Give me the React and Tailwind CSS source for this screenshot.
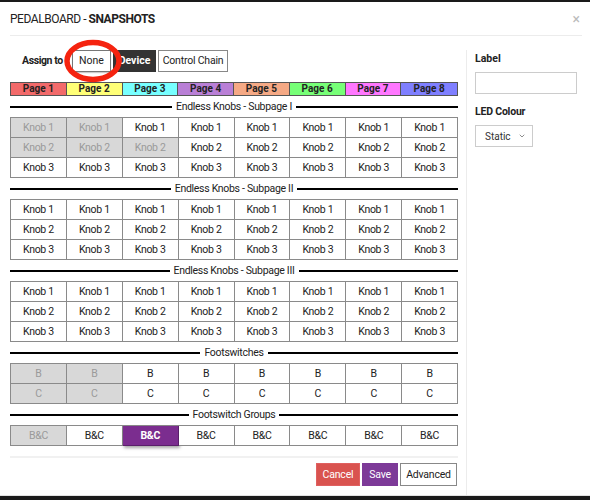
import React from "react";
import { ChevronDown } from "lucide-react";

const pages = [
  { name: "Page 1", bg: "bg-[#f26a6a]" },
  { name: "Page 2", bg: "bg-[#ffff77]" },
  { name: "Page 3", bg: "bg-[#77ffff]" },
  { name: "Page 4", bg: "bg-[#b97fd6]" },
  { name: "Page 5", bg: "bg-[#f5a985]" },
  { name: "Page 6", bg: "bg-[#77ff77]" },
  { name: "Page 7", bg: "bg-[#ff77ff]" },
  { name: "Page 8", bg: "bg-[#7f7fff]" },
];

const SectionTitle = ({ label }) => (
  <div className="flex items-center h-[12px] mt-[5px]">
    <div className="flex-1 h-[2px] bg-black" />
    <span className="px-[4px] text-[10.5px] leading-none text-[#222] tracking-[-0.3px]">{label}</span>
    <div className="flex-1 h-[2px] bg-black" />
  </div>
);

// disabled: "row-col" keys that are greyed out
const Grid = ({ rows, disabled = [], selected = [] }) => (
  <div className="grid grid-cols-8 mt-[4px] border-l border-t border-[#8a8a8a]">
    {rows.map((label, r) =>
      Array.from({ length: 8 }).map((_, c) => {
        const key = `${r}-${c}`;
        const off = disabled.includes(key);
        const sel = selected.includes(key);
        return (
          <div
            key={key}
            className={
              "h-[20px] flex items-center justify-center border-r border-b text-[10.5px] tracking-[-0.3px] " +
              (sel
                ? "bg-[#7b2d8f] text-white font-bold border-[#5a1f6a] shadow-[1px_2px_3px_rgba(0,0,0,0.35)]"
                : off
                ? "bg-[#d8d8d8] text-[#9a9a9a] border-[#8a8a8a]"
                : "bg-white text-[#222] border-[#8a8a8a]")
            }
          >
            {label}
          </div>
        );
      })
    )}
  </div>
);

const knobs = ["Knob 1", "Knob 2", "Knob 3"];

export default function App() {
  return (
    <div
      className="w-[590px] h-[500px] bg-white flex flex-col relative overflow-hidden border-t-2 border-[#1a1a1a]"
      style={{ fontFamily: "Roboto, 'Liberation Sans', sans-serif" }}
    >
      {/* header */}
      <div className="ml-[10px] mr-[8px] h-[34px] flex items-center justify-between border-b border-[#ececec]">
        <div className="text-[12px] tracking-[-0.45px] text-[#222]">
          PEDALBOARD - <span className="font-bold">SNAPSHOTS</span>
        </div>
        <div className="text-[#bbb] text-[14px] leading-none mr-[2px]">×</div>
      </div>

      <div className="flex flex-1">
        {/* left column */}
        <div className="w-[448px] ml-[10px] flex flex-col pt-[14px]">
          <div className="h-[22px] flex items-center text-[10.5px] relative">
            <span className="ml-[12px] w-[50px] whitespace-nowrap font-bold text-[#222] tracking-[-0.4px]">Assign to</span>
            <button className="w-[39px] h-[22px] border border-[#777] bg-white text-[#222] shadow-[0_1px_1px_rgba(0,0,0,0.2)]">
              None
            </button>
            <button className="ml-[2px] w-[43px] h-[22px] bg-[#333] text-white font-bold">Device</button>
            <button className="ml-[2px] w-[70px] h-[22px] border border-[#888] bg-white text-[#222] tracking-[-0.2px]">
              Control Chain
            </button>
            <svg className="absolute left-[53px] top-[-12px]" width="60" height="46" viewBox="0 0 60 46">
              <ellipse cx="30" cy="23" rx="26" ry="18.5" fill="none" stroke="#f5230f" strokeWidth="5.5" />
            </svg>
          </div>

          <div className="grid grid-cols-8 mt-[10px] border border-[#555]">
            {pages.map((p, i) => (
              <div
                key={p.name}
                className={`${p.bg} h-[12px] flex items-center justify-center text-[10px] font-bold text-[#222] leading-none ${
                  i < 7 ? "border-r border-[#555]" : ""
                }`}
              >
                {p.name}
              </div>
            ))}
          </div>

          <SectionTitle label="Endless Knobs - Subpage I" />
          <Grid rows={knobs} disabled={["0-0", "0-1", "1-0", "1-1", "1-2"]} />

          <SectionTitle label="Endless Knobs - Subpage II" />
          <Grid rows={knobs} />

          <SectionTitle label="Endless Knobs - Subpage III" />
          <Grid rows={knobs} />

          <SectionTitle label="Footswitches" />
          <Grid rows={["B", "C"]} disabled={["0-0", "0-1", "1-0", "1-1"]} />

          <SectionTitle label="Footswitch Groups" />
          <Grid rows={["B&C"]} disabled={["0-0"]} selected={["0-2"]} />

          <div className="mt-[10px] border-t-2 border-[#f1f1f1]" />
          <div className="mt-[5px] flex justify-end gap-[2px] pr-[1px] text-[10.5px] tracking-[-0.2px]">
            <button className="w-[44px] h-[23px] bg-[#d9534f] border border-[#e06060] text-white">Cancel</button>
            <button className="w-[36px] h-[23px] bg-[#7d3a98] text-white">Save</button>
            <button className="w-[57px] h-[23px] bg-white border border-[#888] text-[#222]">Advanced</button>
          </div>
        </div>

        {/* right column */}
        <div className="ml-[8px] mt-[14px] border-l border-[#ececec] pl-[8px] flex flex-col">
          <div className="text-[10.5px] font-bold text-[#222] leading-[18px]">Label</div>
          <input className="mt-[4px] w-[102px] h-[22px] border border-[#ccc] outline-none" />
          <div className="mt-[9px] text-[10.5px] font-bold text-[#222] leading-[18px] tracking-[-0.2px]">LED Colour</div>
          <div className="mt-[4px] w-[58px] h-[22px] border border-[#ccc] flex items-center justify-between pl-[9px] pr-[6px] text-[10px] text-[#333]">
            <span>Static</span>
            <ChevronDown size={8} strokeWidth={2} className="text-[#555]" />
          </div>
        </div>
      </div>

      <div className="h-[5px] border-t border-[#e2e2e2] bg-[#1a1a1a]" />
    </div>
  );
}
